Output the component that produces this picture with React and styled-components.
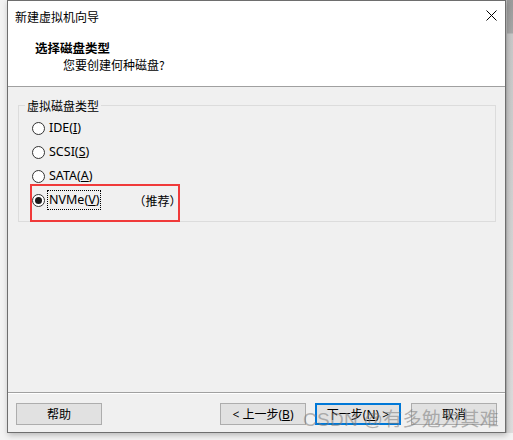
import React from "react";
import styled, { createGlobalStyle } from "styled-components";

const GlobalStyle = createGlobalStyle`
    html, body {
        margin: 0;
        padding: 0;
        background: #f3f3f3;
    }
    body {
        font-family: "Noto Sans", "Noto Sans CJK SC", sans-serif;
        font-size: 12px;
        color: #000;
    }
`;

const Page = styled.div`
    width: 513px;
    height: 440px;
    display: flex;
    align-items: flex-start;
    overflow: hidden;
`;

const Gutter = styled.div`
    width: 7px;
    height: 433px;
    flex-shrink: 0;
`;

const SideStrip = styled.div`
    flex: 1;
    height: 433px;
    background: linear-gradient(to bottom, #9c9c9c 0, #a8a8a8 33px, #c9c9c9 34px, #dedede 100%);
    border-left: 1px solid #c0c0c0;
`;

const Window = styled.div`
    position: relative;
    width: 499px;
    height: 433px;
    box-sizing: border-box;
    border: 1px solid #6e6e6e;
    background: #f0f0f0;
    display: flex;
    flex-direction: column;
    flex-shrink: 0;
    box-shadow: 1px 2px 6px rgba(0, 0, 0, 0.25);
`;

const TitleBar = styled.div`
    height: 30px;
    background: #fff;
    display: flex;
    align-items: center;
    justify-content: space-between;
    padding: 0 7px 0 7px;
    font-family: "Noto Sans CJK SC", sans-serif;
    font-size: 12px;
`;

const CloseButton = styled.div`
    width: 14px;
    height: 14px;
    display: flex;
    align-items: center;
    justify-content: center;
    margin-top: -1px;
`;

const Header = styled.div`
    height: 56px;
    background: #fff;
    display: flex;
    flex-direction: column;
    padding-left: 27px;
    box-sizing: border-box;
    padding-top: 8px;
    border-bottom: 1px solid #a0a0a0;
`;

const Heading = styled.div`
    font-family: "Noto Sans CJK SC", sans-serif;
    font-weight: 700;
    font-size: 12.5px;
    line-height: 17px;
`;

const SubHeading = styled.div`
    font-family: "Noto Sans CJK SC", sans-serif;
    font-size: 12px;
    line-height: 17px;
    padding-left: 28px;
`;

const Body = styled.div`
    position: relative;
    flex: 1;
    padding: 10px 9px 0 10px;
    border-bottom: 1px solid #a0a0a0;
`;

const GroupBox = styled.fieldset`
    margin: 0;
    padding: 2px 0 9px 0;
    border: 1px solid #dcdcdc;
    min-width: 0;
`;

const Legend = styled.legend`
    margin-left: 6px;
    padding: 0 2px;
    font-family: "Noto Sans CJK SC", sans-serif;
    font-size: 12px;
    line-height: 17px;
`;

const RadioRow = styled.label`
    height: 24px;
    display: flex;
    align-items: center;
    padding-left: 13px;
    gap: 3px;
`;

const RadioCircle = styled.span`
    width: 13px;
    height: 13px;
    box-sizing: border-box;
    border-radius: 50%;
    border: 1px solid #333;
    background: #fff;
    display: flex;
    align-items: center;
    justify-content: center;
    flex-shrink: 0;

    &::after {
        content: "";
        width: 7px;
        height: 7px;
        border-radius: 50%;
        background: ${(p) => (p.$checked ? "#1a1a1a" : "transparent")};
    }
`;

const RadioLabel = styled.span`
    font-family: "Noto Sans", "Noto Sans CJK SC", sans-serif;
    font-size: 12.5px;
    line-height: 18px;
    padding: 0 1px;
    outline: ${(p) => (p.$focused ? "1px dotted #000" : "none")};
    outline-offset: 0;
`;

const Note = styled.span`
    font-family: "Noto Sans CJK SC", sans-serif;
    font-size: 12px;
    margin-left: 30px;
`;

const Highlight = styled.div`
    position: absolute;
    left: 22px;
    top: 97px;
    width: 150px;
    height: 38px;
    box-sizing: border-box;
    border: 2px solid #f03a3a;
    pointer-events: none;
`;

const Footer = styled.div`
    height: 39px;
    box-sizing: border-box;
    display: flex;
    align-items: flex-start;
    padding: 9px 8px 0 8px;
    border-top: 1px solid #fff;
`;

const Button = styled.div`
    width: 86px;
    height: 22px;
    box-sizing: border-box;
    border: ${(p) => (p.$default ? "2px solid #0078d7" : "1px solid #adadad")};
    background: #e1e1e1;
    display: flex;
    align-items: center;
    justify-content: center;
    font-family: "Noto Sans", "Noto Sans CJK SC", sans-serif;
    font-size: 12px;
    margin-left: ${(p) => p.$gap || 0}px;
`;

const Spacer = styled.div`
    flex: 1;
`;

const Watermark = styled.div`
    position: absolute;
    right: 6px;
    bottom: 1px;
    font-family: "Liberation Sans", "Noto Sans CJK SC", sans-serif;
    font-size: 19px;
    color: rgba(120, 120, 120, 0.55);
    letter-spacing: 0.3px;
    pointer-events: none;
    white-space: nowrap;
`;

function CloseIcon() {
    return (
        <svg width="11" height="11" viewBox="0 0 11 11">
            <path d="M0.5 0.5 L10.5 10.5 M10.5 0.5 L0.5 10.5" stroke="#000" strokeWidth="1" />
        </svg>
    );
}

const options = [
    { key: "ide", text: "IDE(", mn: "I" },
    { key: "scsi", text: "SCSI(", mn: "S" },
    { key: "sata", text: "SATA(", mn: "A" },
    { key: "nvme", text: "NVMe(", mn: "V", checked: true, note: "（推荐）" },
];

function App() {
    return (
        <Page>
            <GlobalStyle />
            <Gutter />
            <Window>
                <TitleBar>
                    <span>新建虚拟机向导</span>
                    <CloseButton>
                        <CloseIcon />
                    </CloseButton>
                </TitleBar>
                <Header>
                    <Heading>选择磁盘类型</Heading>
                    <SubHeading>您要创建何种磁盘?</SubHeading>
                </Header>
                <Body>
                    <GroupBox>
                        <Legend>虚拟磁盘类型</Legend>
                        {options.map((o) => (
                            <RadioRow key={o.key}>
                                <RadioCircle $checked={o.checked} />
                                <RadioLabel $focused={o.checked}>
                                    {o.text}
                                    <u>{o.mn}</u>)
                                </RadioLabel>
                                {o.note && <Note>{o.note}</Note>}
                            </RadioRow>
                        ))}
                    </GroupBox>
                    <Highlight />
                </Body>
                <Footer>
                    <Button>帮助</Button>
                    <Spacer />
                    <Button>&lt; 上一步(<u>B</u>)</Button>
                    <Button $default $gap={9}>下一步(<u>N</u>) &gt;</Button>
                    <Button $gap={10}>取消</Button>
                </Footer>
                <Watermark>CSDN @有多勉为其难</Watermark>
            </Window>
            <SideStrip />
        </Page>
    );
}

export default App;
